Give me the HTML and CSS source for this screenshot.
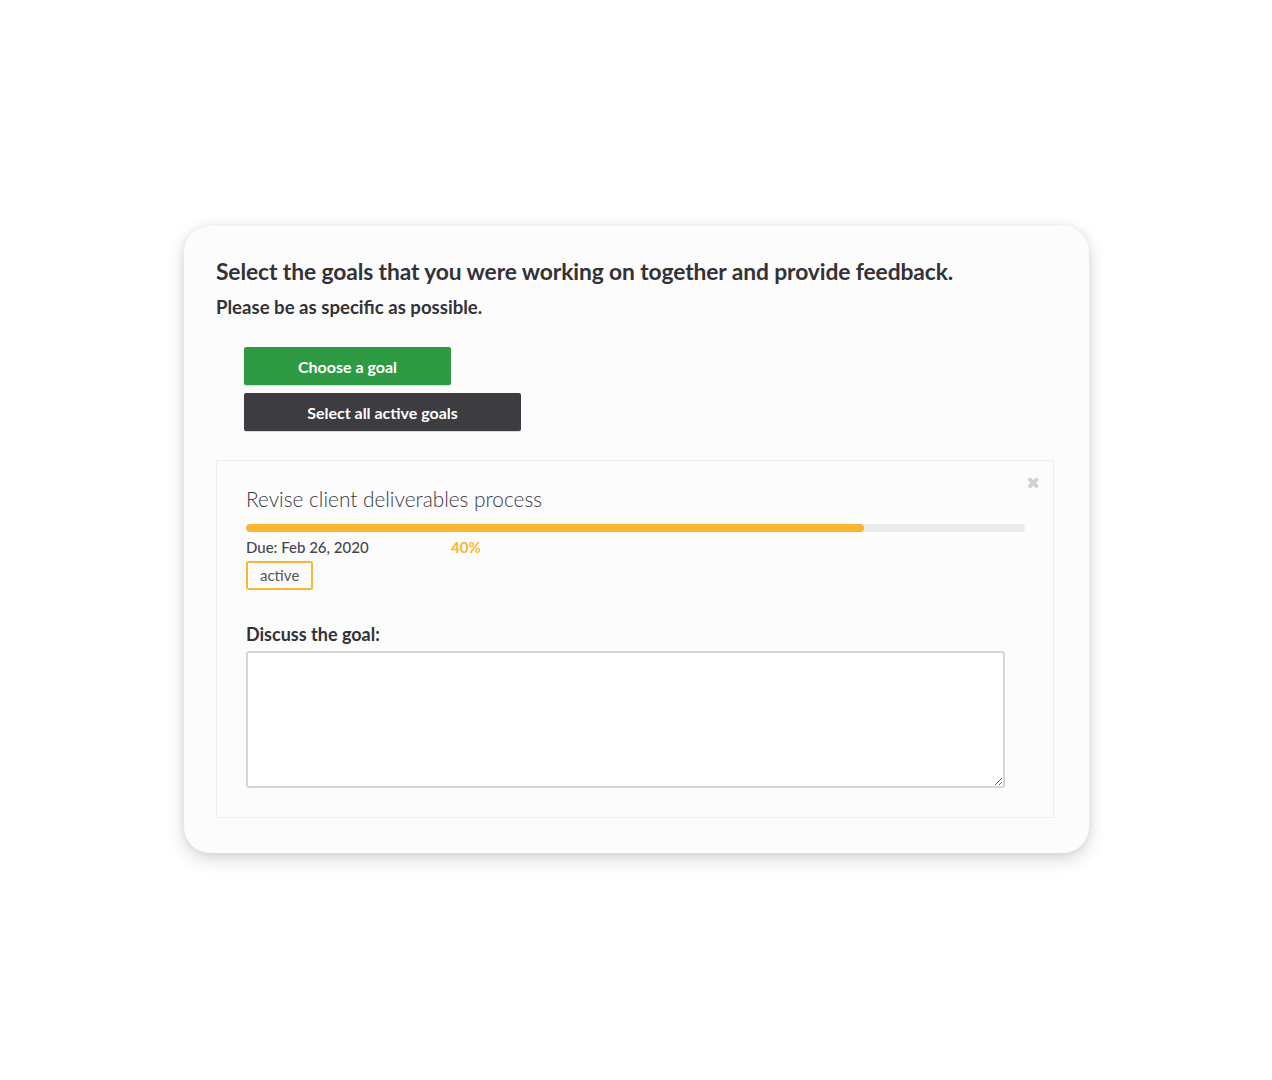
FILE: index.html
```html
<!DOCTYPE html>
<html>
<head>
<meta charset="utf-8">
<link rel="stylesheet" href="styles.css">
</head>
<body>
<div class="page">
  <div class="card">
    <h1 class="title">Select the goals that you were working on together and provide feedback.</h1>
    <p class="subtitle">Please be as specific as possible.</p>
    <div class="actions">
      <button class="btn btn-green">Choose a goal</button>
      <button class="btn btn-dark">Select all active goals</button>
    </div>
    <div class="goal">
      <span class="close">&#10006;</span>
      <h2 class="goal-title">Revise client deliverables process</h2>
      <div class="progress"><div class="progress-fill" style="width:79.3%"></div></div>
      <div class="meta">
        <span class="due">Due: Feb 26, 2020</span>
        <span class="pct">40%</span>
      </div>
      <span class="badge">active</span>
      <label class="discuss">Discuss the goal:</label>
      <textarea class="textarea"></textarea>
    </div>
  </div>
</div>
</body>
</html>
```

FILE: styles.css
```css
html, body {
  margin: 0;
  padding: 0;
  background: #ffffff;
}
body {
  font-family: "Lato", "Open Sans", sans-serif;
  color: #333236;
}
.page {
  width: 1272px;
  height: 1080px;
  padding-top: 226px;
  padding-left: 184px;
  box-sizing: border-box;
}
.card {
  width: 905px;
  height: 627px;
  box-sizing: border-box;
  background: #fdfcfd;
  border-radius: 26px;
  box-shadow: 0 6px 18px rgba(0,0,0,0.16), 0 0 8px rgba(0,0,0,0.06);
  padding: 30px 35px 0 32px;
}
.title {
  margin: 0;
  font-size: 22.8px;
  font-weight: 700;
  line-height: 30px;
  color: #333236;
  letter-spacing: -0.1px;
  white-space: nowrap;
}
.subtitle {
  margin: 9px 0 0 0;
  font-size: 18.6px;
  font-weight: 700;
  line-height: 24px;
  color: #333236;
}
.actions {
  display: flex;
  flex-direction: column;
  align-items: flex-start;
  gap: 8px;
  margin: 28px 0 0 28px;
}
.btn {
  border: none;
  border-radius: 2px;
  font-family: inherit;
  font-weight: 700;
  font-size: 16px;
  color: #fff;
  height: 38px;
  padding: 0;
  box-shadow: 0 1px 1px rgba(0,0,0,0.15);
}
.btn-green {
  background: #2f9a44;
  width: 207px;
}
.btn-dark {
  background: #3d3c40;
  width: 277px;
}
.goal {
  position: relative;
  margin-top: 29px;
  border: 1px solid #f1eff1;
  background: #fdfcfd;
  height: 358px;
  box-sizing: border-box;
  padding: 24px 29px 0 29px;
  display: flex;
  flex-direction: column;
  align-items: flex-start;
}
.close {
  position: absolute;
  right: 13px;
  top: 11px;
  font-size: 17px;
  color: #d2d0d3;
}
.goal-title {
  margin: 0;
  font-size: 20.8px;
  font-weight: 300;
  line-height: 28px;
  color: #3a393e;
}
.progress {
  margin-top: 11px;
  width: 779px;
  height: 8px;
  background: #ebeaec;
  border-radius: 4px;
  overflow: hidden;
}
.progress-fill {
  height: 100%;
  background: #fbb533;
  border-radius: 4px;
}
.meta {
  display: flex;
  margin-top: 5px;
  font-size: 15px;
  line-height: 20px;
}
.due {
  width: 205px;
  color: #46454a;
  font-weight: 500;
}
.pct {
  color: #fbb533;
  font-weight: 700;
}
.badge {
  margin-top: 4px;
  border: 2px solid #fbb533;
  border-radius: 3px;
  height: 29px;
  box-sizing: border-box;
  padding: 0 12px;
  font-size: 15px;
  line-height: 25px;
  color: #55545a;
}
.discuss {
  margin-top: 32px;
  font-size: 18px;
  font-weight: 700;
  line-height: 24px;
  color: #333236;
}
.textarea {
  margin-top: 5px;
  width: 759px;
  height: 137px;
  box-sizing: border-box;
  border: 2px solid #d6d5d8;
  border-radius: 3px;
  background: #fff;
}
```
